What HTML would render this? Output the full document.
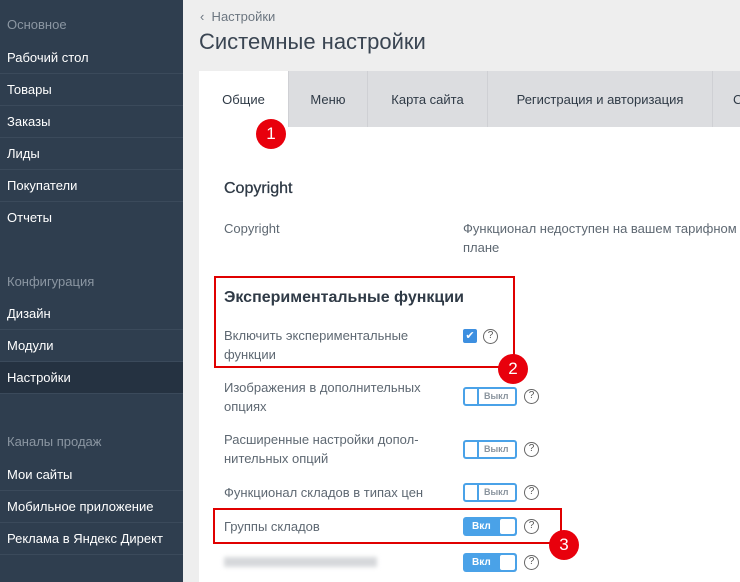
<!DOCTYPE html>
<html><head><meta charset="utf-8"><style>
*{margin:0;padding:0;box-sizing:border-box}
body{width:740px;height:582px;overflow:hidden;background:#eeeeee;font-family:"Liberation Sans","DejaVu Sans",sans-serif;position:relative}
.sb{position:absolute;left:0;top:0;width:183px;height:582px;background:#2f3e4f}
.h{position:absolute;left:7px;color:#8b96a2;font-size:13px}
.it{position:absolute;left:0;width:183px;height:32px;line-height:31px;padding-left:7px;color:#fff;font-size:13px;border-bottom:1px solid #3b4a5b}
.a{position:absolute}
.tab{position:absolute;top:71px;height:56px;line-height:58px;text-align:center;font-size:13px;color:#2f3a46;background:#dcdde0;border-left:1px solid #cfd0d4}
.lbl{position:absolute;left:224px;font-size:13px;color:#5e6872;line-height:19px}
.tg{position:absolute;left:463px;width:54px;height:19px;border:2px solid #4aa2e8;border-radius:3px;background:#fff}
.tg .k{position:absolute;left:0;top:0;width:14px;height:15px;border-right:2px solid #4aa2e8}
.tg .t{position:absolute;left:19px;top:2px;font-size:9px;font-weight:bold;color:#8a949e}
.on{position:absolute;left:463px;width:54px;height:19px;border-radius:3px;background:#4aa2e8}
.on .t{position:absolute;left:9px;top:4px;font-size:10px;font-weight:bold;color:#fff}
.on .k{position:absolute;right:2px;top:2px;width:15px;height:15px;background:#fff;border-radius:2px}
.q{position:absolute;width:15px;height:15px;border:1.5px solid #666;border-radius:50%;font-size:10px;text-align:center;line-height:12px;color:#555}
.rb{position:absolute;border:2px solid #e00000}
.n{position:absolute;width:30px;height:30px;border-radius:50%;background:#e8000c;color:#fff;font-size:17px;text-align:center;line-height:30px}
</style></head><body>
<div class="sb">
<div class="h" style="top:17px">Основное</div>
<div class="it" style="top:42px">Рабочий стол</div>
<div class="it" style="top:74px">Товары</div>
<div class="it" style="top:106px">Заказы</div>
<div class="it" style="top:138px">Лиды</div>
<div class="it" style="top:170px">Покупатели</div>
<div class="it" style="top:202px;border-bottom:none">Отчеты</div>
<div class="h" style="top:274px">Конфигурация</div>
<div class="it" style="top:298px">Дизайн</div>
<div class="it" style="top:330px">Модули</div>
<div class="it" style="top:362px;background:#253241">Настройки</div>
<div class="h" style="top:434px">Каналы продаж</div>
<div class="it" style="top:459px">Мои сайты</div>
<div class="it" style="top:491px">Мобильное приложение</div>
<div class="it" style="top:523px">Реклама в Яндекс Директ</div>
</div>
<div class="a" style="left:200px;top:9px;font-size:13px;color:#6c7680">‹&nbsp; Настройки</div>
<div class="a" style="left:199px;top:29px;font-size:22px;color:#3a4552">Системные настройки</div>
<div class="a" style="left:199px;top:71px;width:541px;height:511px;background:#fff"></div>
<div class="tab" style="left:199px;width:89px;background:#fff;border:none">Общие</div>
<div class="tab" style="left:288px;width:79px">Меню</div>
<div class="tab" style="left:367px;width:120px">Карта сайта</div>
<div class="tab" style="left:487px;width:225px">Регистрация и авторизация</div>
<div class="tab" style="left:712px;width:40px;text-align:left;padding-left:20px">С</div>
<div class="a" style="left:224px;top:180px;font-size:16px;color:#2f3a46;-webkit-text-stroke:0.3px #2f3a46">Copyright</div>
<div class="lbl" style="top:219px">Copyright</div>
<div class="lbl" style="top:219px;left:463px;width:300px">Функционал недоступен на вашем тарифном<br>плане</div>
<div class="a" style="left:224px;top:289px;font-size:16px;font-weight:bold;color:#2f3a46">Экспериментальные функции</div>
<div class="lbl" style="top:326px">Включить экспериментальные<br>функции</div>
<div class="a" style="left:463px;top:329px;width:14px;height:14px;background:#3d8fe0;border-radius:2px;color:#fff;font-size:11px;text-align:center;line-height:14px">✔</div>
<div class="q" style="left:483px;top:329px">?</div>
<div class="lbl" style="top:378px">Изображения в дополнительных<br>опциях</div>
<div class="tg" style="top:387px"><div class="k"></div><div class="t">Выкл</div></div>
<div class="q" style="left:524px;top:389px">?</div>
<div class="lbl" style="top:430px">Расширенные настройки допол-<br>нительных опций</div>
<div class="tg" style="top:440px"><div class="k"></div><div class="t">Выкл</div></div>
<div class="q" style="left:524px;top:442px">?</div>
<div class="lbl" style="top:483px">Функционал складов в типах цен</div>
<div class="tg" style="top:483px"><div class="k"></div><div class="t">Выкл</div></div>
<div class="q" style="left:524px;top:485px">?</div>
<div class="lbl" style="top:517px">Группы складов</div>
<div class="on" style="top:517px"><div class="t">Вкл</div><div class="k"></div></div>
<div class="q" style="left:524px;top:519px">?</div>
<div class="a" style="left:224px;top:557px;width:153px;height:10px;background:#d6d8db;filter:blur(2px)"></div>
<div class="on" style="top:553px"><div class="t">Вкл</div><div class="k"></div></div>
<div class="q" style="left:524px;top:555px">?</div>
<div class="rb" style="left:214px;top:276px;width:301px;height:92px"></div>
<div class="rb" style="left:213px;top:508px;width:349px;height:36px"></div>
<div class="n" style="left:256px;top:119px">1</div>
<div class="n" style="left:498px;top:354px">2</div>
<div class="n" style="left:549px;top:530px">3</div>
</body></html>
